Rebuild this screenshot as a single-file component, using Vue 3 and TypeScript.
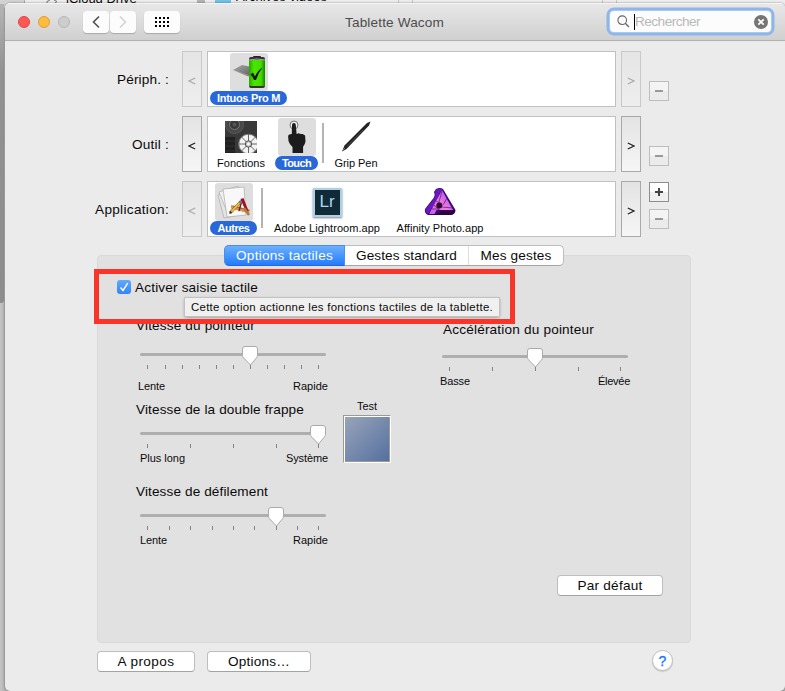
<script setup lang="ts">
import { ref } from 'vue'
import type { Directive } from 'vue'

interface Item {
  label: string
  icon: string
  width: number
  textWidth: number
  selected?: boolean
  separator?: boolean
}

interface Row {
  label: string
  labelWidth: number
  prev: boolean
  next: boolean
  add: boolean
  items: Item[]
}

interface Slider {
  id: string
  title: string
  titleWidth: number
  ticks: number
  value: number
  low: string
  lowWidth: number
  high: string
  highWidth: number
}

// Adjusts the tracking so that a label takes exactly the given width
const vFit: Directive<HTMLElement, number> = {
  mounted(el, binding) {
    const count = (el.textContent ?? '').length
    const natural = el.getBoundingClientRect().width
    el.style.letterSpacing = `${(binding.value - natural) / count}px`
  },
}

const search = ref('')
const touchEnabled = ref(true)
const activeTab = ref(0)

const tabs = [
  { label: 'Options tactiles', width: 97 },
  { label: 'Gestes standard', width: 101 },
  { label: 'Mes gestes', width: 71 },
]

const rows: Row[] = [
  {
    label: 'Périph. :', labelWidth: 52, prev: false, next: false, add: false,
    items: [{ label: 'Intuos Pro M', icon: 'tablet', width: 77, textWidth: 63, selected: true }],
  },
  {
    label: 'Outil :', labelWidth: 37, prev: true, next: true, add: false,
    items: [
      { label: 'Fonctions', icon: 'functions', width: 62, textWidth: 48 },
      { label: 'Touch', icon: 'touch', width: 43, textWidth: 29, selected: true, separator: true },
      { label: 'Grip Pen', icon: 'pen', width: 56, textWidth: 43 },
    ],
  },
  {
    label: 'Application:', labelWidth: 74, prev: false, next: true, add: true,
    items: [
      { label: 'Autres', icon: 'apps', width: 47, textWidth: 32, selected: true, separator: true },
      { label: 'Adobe Lightroom.app', icon: 'lightroom', width: 120, textWidth: 106 },
      { label: 'Affinity Photo.app', icon: 'affinity', width: 100, textWidth: 87 },
    ],
  },
]

const leftSliders: Slider[] = [
  { id: 'pointer', title: 'Vitesse du pointeur', titleWidth: 119, ticks: 11, value: 6, low: 'Lente', lowWidth: 27, high: 'Rapide', highWidth: 35 },
  { id: 'double', title: 'Vitesse de la double frappe', titleWidth: 168, ticks: 5, value: 4, low: 'Plus long', lowWidth: 45, high: 'Système', highWidth: 42 },
  { id: 'scroll', title: 'Vitesse de défilement', titleWidth: 132, ticks: 9, value: 6, low: 'Lente', lowWidth: 27, high: 'Rapide', highWidth: 35 },
]

const rightSliders: Slider[] = [
  { id: 'accel', title: 'Accélération du pointeur', titleWidth: 151, ticks: 5, value: 2, low: 'Basse', lowWidth: 30, high: 'Élevée', highWidth: 32 },
]

const columns = [leftSliders, rightSliders]

const tickX = (s: Slider, i: number) => 11.5 + Math.ceil((171 / (s.ticks - 1)) * i)
</script>

<template>
  <div class="desktop">
    <div class="behind">
      <span class="behind-toolbar"></span>
      <svg class="behind-cloud" width="18" height="4" viewBox="0 0 18 4">
        <path d="M3 3.5V1.5L6 0M10 0l3 1.5L11 3" fill="none" stroke="#777" />
      </svg>
      <span class="behind-drive">iCloud Drive</span>
      <span class="behind-scroll"></span>
      <span class="behind-folder"></span>
      <span class="behind-videos">Archives vidéos</span>
      <span class="behind-line first"></span>
      <span class="behind-line second"></span>
    </div>
    <div class="behind-thumb"></div>

    <div class="window">
      <header class="titlebar">
        <div class="controls">
          <span class="light red"></span>
          <span class="light yellow"></span>
          <span class="light off"></span>
          <button class="tool back">
            <svg width="10" height="14" viewBox="0 0 10 14"><path d="M8 1.5 2.5 7 8 12.5" fill="none" stroke="#505050" stroke-width="1.6" /></svg>
          </button>
          <button class="tool forward" disabled>
            <svg width="10" height="14" viewBox="0 0 10 14"><path d="M2 1.5 7.5 7 2 12.5" fill="none" stroke="#cfcfcf" stroke-width="1.4" /></svg>
          </button>
          <button class="tool grid">
            <svg width="15" height="11" viewBox="0 0 15 11">
              <template v-for="y in 3" :key="y">
                <rect v-for="x in 4" :key="x" :x="(x - 1) * 4" :y="(y - 1) * 4" width="2" height="2" />
              </template>
            </svg>
          </button>
        </div>
        <h1 class="title"><span v-fit="99">Tablette Wacom</span></h1>
        <div class="search">
          <svg class="lens" width="13" height="13" viewBox="0 0 13 13">
            <circle cx="5.2" cy="5.2" r="4.3" fill="none" stroke="#666" stroke-width="1.1" />
            <path d="m8.3 8.3 3.6 3.7" stroke="#666" stroke-width="1.3" />
          </svg>
          <span class="caret"></span>
          <span class="placeholder" v-fit="65">{{ search || 'Rechercher' }}</span>
          <svg class="clear" width="14" height="14" viewBox="0 0 14 14">
            <circle cx="7" cy="7" r="7" fill="#757575" />
            <path d="m4.3 4.3 5.4 5.4m0-5.4L4.3 9.7" stroke="#fff" stroke-width="1.8" />
          </svg>
        </div>
      </header>

      <main class="content">
        <section v-for="row in rows" :key="row.label" class="row">
          <div class="row-label"><span v-fit="row.labelWidth">{{ row.label }}</span></div>
          <button class="arrow" :disabled="!row.prev">
            <svg width="8" height="8" viewBox="0 0 8 8"><path d="M7.2 1 1 4l6.2 3" /></svg>
          </button>
          <div class="list">
            <template v-for="item in row.items" :key="item.label">
              <div class="item" :class="{ selected: item.selected }" :style="{ width: item.width + 'px' }">
                <div class="icon">
                  <svg v-if="item.icon === 'tablet'" width="38" height="38" viewBox="0 0 38 38">
                    <defs>
                      <linearGradient id="battery">
                        <stop offset="0" stop-color="#22a800" />
                        <stop offset=".3" stop-color="#4be600" />
                        <stop offset=".75" stop-color="#43dc00" />
                        <stop offset="1" stop-color="#168000" />
                      </linearGradient>
                      <linearGradient id="slab" x2="1" y2="1">
                        <stop offset="0" stop-color="#aaa" />
                        <stop offset="1" stop-color="#5e5e5e" />
                      </linearGradient>
                    </defs>
                    <path d="M3 17 12 12l10 2v9l-4-1z" fill="url(#slab)" />
                    <path d="M3 17l15 5 3 1v1l-4-1z" fill="#888" />
                    <rect x="23" y="3" width="8" height="3" rx="1" fill="#222" />
                    <rect x="19" y="4" width="16" height="31" rx="2" fill="#333" />
                    <rect x="19" y="7" width="16" height="26" fill="url(#battery)" />
                    <path d="M19 7q8-2 16 0" stroke="#aaa" fill="none" />
                    <path d="M20.5 21.5 23 19.5l2 4Q28 17 32.5 14.5 28 20 26 27h-2q-1-3-3.5-5.5z" fill="#171717" />
                  </svg>
                  <svg v-else-if="item.icon === 'functions'" width="32" height="32" viewBox="0 0 32 32">
                    <rect width="32" height="32" fill="#393939" />
                    <circle cx="9.5" cy="3.5" r="9" fill="#484848" stroke="#5b5b5b" />
                    <circle cx="9.5" cy="3.5" r="5" fill="#383838" stroke="#777" />
                    <circle cx="9.5" cy="3.5" r="2" fill="#555" />
                    <path d="M0 16h10v16H0z" fill="#202020" />
                    <path d="M0 20h10M0 25h10M0 30h10" stroke="#333" />
                    <circle cx="23.5" cy="23" r="9.8" fill="#f2f2f2" stroke="#777" />
                    <path d="M23.5 13v20M13.5 23h20M16.5 16l14 14M30.5 16l-14 14" stroke="#666" />
                    <circle cx="23.5" cy="23" r="3.2" fill="#bbb" stroke="#555" />
                    <circle cx="23.5" cy="23" r="1.5" fill="#fff" />
                  </svg>
                  <svg v-else-if="item.icon === 'touch'" width="38" height="38" viewBox="0 0 38 38">
                    <circle cx="16" cy="7" r="4" fill="#eee" stroke="#777" />
                    <path d="M14 7q0-2 1.9-2t1.9 2l.8 9 2-.7 2 .8 2-.2 2.500 1.600.4 6q-.5 3-2.400 5.300V35H14.500v-6q-3.500-3.500-4-6l-.4-5q.4-2 3.700-2z" fill="#1c1c1c" />
                  </svg>
                  <svg v-else-if="item.icon === 'pen'" width="32" height="32" viewBox="0 0 32 32">
                    <path d="M2 30.500 4.500 24.500 27 2l3.500-1.500L29 4.500 6.500 28z" fill="#232323" />
                    <path d="m7 25.500 16-16.500" stroke="#4b4b4b" />
                    <path d="m3 29 2-2" stroke="#777" />
                  </svg>
                  <svg v-else-if="item.icon === 'apps'" width="38" height="38" viewBox="0 0 38 38">
                    <g stroke="#aaa" stroke-width=".7">
                      <path d="m3 12 7-5 14 25-15 3z" fill="#e5e5e5" />
                      <path d="m4 9 19-6 8 26-17 5z" fill="#f1f1f1" />
                      <path d="m8 6 21-2 2 28-19 2z" fill="#f8f8f8" />
                    </g>
                    <path d="m16 22 19 4.500-1 4-18-5z" fill="#d59461" />
                    <path d="m18 23 16 4.500" stroke="#8e4f27" stroke-width=".7" />
                    <path d="m25.500 16 3-1 5 13-2.500 1z" fill="#a50f19" />
                    <path d="m27 17-3 11" stroke="#742020" stroke-width="1.500" />
                    <path d="m29 25 5 7" stroke="#b17b46" stroke-width="2.500" />
                    <path d="M15 30 26 18.500" stroke="#6b4a16" stroke-width="2.800" />
                    <path d="M16 29 25 19.500" stroke="#f2bd2f" stroke-width="2" />
                    <path d="m24.500 20 2-2" stroke="#7770a9" stroke-width="2.500" />
                    <path d="m14 31 1.500-3 1.500 1.500z" fill="#222" />
                  </svg>
                  <div v-else-if="item.icon === 'lightroom'" class="lightroom">Lr</div>
                  <svg v-else width="32" height="32" viewBox="0 0 32 32">
                    <defs>
                      <linearGradient id="prism" x1="0" y1="1" x2="1" y2="0">
                        <stop offset="0" stop-color="#b65af2" />
                        <stop offset=".45" stop-color="#ef7fdc" />
                        <stop offset="1" stop-color="#9a3dff" />
                      </linearGradient>
                    </defs>
                    <path d="M12 3q4-2 7 0l12.500 21q0 4-4 5H4q-4-2-3-6l7-9q4-4 2-8z" fill="#3c0870" />
                    <path d="M11 5.500 13 3h5l-7.500 15L4 28q-3-2-2.300-5L9 14q3-3 2-8.500z" fill="#6818bd" />
                    <path d="m18 4 11 20H12.500l-2 4H5z" fill="url(#prism)" />
                    <path d="M15 27v-2l16-1q0 4-4 5H6z" fill="#2c0345" />
                    <path d="m12 15 6 3M10 19l5 5M19 19l4-7M16 23H8M18 21l11 1M15 16l3-11" stroke="#6a1a80" stroke-width=".8" />
                    <circle cx="15.300" cy="19.500" r="3" fill="#330832" />
                  </svg>
                </div>
                <div class="item-label"><span v-fit="item.textWidth">{{ item.label }}</span></div>
              </div>
              <div v-if="item.separator" class="separator"></div>
            </template>
          </div>
          <button class="arrow" :disabled="!row.next">
            <svg width="8" height="8" viewBox="0 0 8 8"><path d="M.8 1 7 4 .8 7" /></svg>
          </button>
          <div class="edit">
            <button v-if="row.add" class="square add">
              <svg width="10" height="10" viewBox="0 0 10 10"><path d="M1 5h8M5 1v8" stroke="#444" stroke-width="2" /></svg>
            </button>
            <button class="square" disabled>
              <svg width="10" height="10" viewBox="0 0 10 10"><path d="M1 5h8" stroke="#999" stroke-width="2" /></svg>
            </button>
          </div>
        </section>

        <section class="panel">
          <nav class="tabs">
            <button
              v-for="(tab, i) in tabs"
              :key="tab.label"
              class="tab"
              :class="{ active: activeTab === i }"
              @click="activeTab = i"
            >
              <span v-fit="tab.width">{{ tab.label }}</span>
            </button>
          </nav>

          <div class="enable" @click="touchEnabled = !touchEnabled">
            <span class="checkbox">
              <svg v-if="touchEnabled" width="14" height="14" viewBox="0 0 14 14"><path d="m3.500 7.500 2.500 3 4.700-7.300" fill="none" stroke="#fff" stroke-width="1.400" /></svg>
            </span>
            <span class="enable-label" v-fit="123">Activer saisie tactile</span>
          </div>

          <div class="columns">
            <template v-for="(column, c) in columns" :key="c">
              <div class="column">
                <div v-for="s in column" :key="s.id" class="slider" :class="s.id">
                  <div class="slider-title"><span v-fit="s.titleWidth">{{ s.title }}</span></div>
                  <svg width="196" height="24" viewBox="0 0 196 24">
                    <rect x="4" y="8" width="186" height="3" rx="1.500" fill="#aeaeae" />
                    <path v-for="n in s.ticks" :key="n" :d="`M${tickX(s, n - 1)} 20v4`" stroke="#848484" />
                    <g :transform="`translate(${tickX(s, s.value) - 8.5} 0)`">
                      <path d="M3 1.500h10q2.500 0 2.500 2.500v6.500q0 1.200-1 2.300L8.500 20 1.500 12.800q-1-1.100-1-2.300V4Q.500 1.500 3 1.500z" fill="#fff" stroke="#aaa" />
                    </g>
                  </svg>
                  <div class="bounds">
                    <span v-fit="s.lowWidth">{{ s.low }}</span>
                    <span v-fit="s.highWidth">{{ s.high }}</span>
                  </div>
                </div>
              </div>
              <div v-if="c === 0" class="test">
                <span v-fit="20">Test</span>
                <div class="test-area"></div>
              </div>
            </template>
          </div>

          <button class="push default"><span v-fit="65">Par défaut</span></button>
        </section>

        <footer class="footer">
          <button class="push about"><span v-fit="57">A propos</span></button>
          <button class="push options"><span v-fit="62">Options…</span></button>
          <button class="help">?</button>
        </footer>
      </main>
    </div>

    <div class="tooltip"><span v-fit="302">Cette option actionne les fonctions tactiles de la tablette.</span></div>
    <div class="highlight"></div>
  </div>
</template>

<style>
body {
  margin: 0;
  overflow: hidden;
}
</style>

<style scoped>
* {
  box-sizing: border-box;
}

.desktop {
  position: relative;
  width: 785px;
  height: 691px;
  padding: 3px 0 0 5px;
  overflow: hidden;
  background: linear-gradient(to right, #c5c5c5, #b0b0b0 5px);
  font-family: 'Liberation Sans', Arial, sans-serif;
  font-size: 13.6px;
  line-height: 16px;
  color: #0a0a0a;
}

button {
  display: flex;
  align-items: center;
  justify-content: center;
  padding: 0;
  margin: 0;
  border: none;
  font: inherit;
  color: inherit;
}

span {
  white-space: nowrap;
}

svg {
  display: block;
  flex: none;
}

/* Finder window showing behind the preferences */
.behind {
  position: absolute;
  inset: 0 0 auto 0;
  height: 8px;
  background: #ededed;
}

.behind span,
.behind svg {
  position: absolute;
}

.behind-toolbar {
  left: 0;
  width: 25px;
  height: 8px;
  background: #d2d2d2;
  border-right: 1px solid #aaa;
}

.behind-cloud {
  left: 44px;
  top: 0;
}

.behind-drive {
  left: 66px;
  top: -9px;
  font-size: 13px;
}

.behind-scroll {
  left: 197px;
  width: 8px;
  height: 8px;
  background: #b2b2b2;
}

.behind-folder {
  left: 215px;
  width: 16px;
  height: 3px;
  background: #76c0e8;
}

.behind-videos {
  left: 236px;
  top: -11px;
  font-size: 13px;
}

.behind-line {
  width: 15px;
  height: 8px;
  border: 1px solid #c8c8c8;
  border-width: 0 1px;
}

.behind-line.first {
  left: 398px;
}

.behind-line.second {
  left: 602px;
}

.behind-thumb {
  position: absolute;
  left: 0;
  top: 4px;
  width: 4px;
  height: 299px;
  border-radius: 0 0 3px 0;
  background: linear-gradient(#b5b5b5, #929292 70px, #8d8d8d);
}

.window {
  position: relative;
  height: 688px;
  border-radius: 5px;
  overflow: hidden;
  background: #ebebeb;
  box-shadow: 0 0 2px rgba(0, 0, 0, 0.5);
}

.titlebar {
  display: grid;
  grid-template-columns: 1fr auto 1fr;
  align-items: center;
  height: 38px;
  padding: 0 14px 0 13px;
  border-bottom: 1px solid #b1b1b1;
  background: linear-gradient(#e8e8e8, #d0d0d0);
  box-shadow: inset 0 1px #f5f5f5;
}

.controls {
  display: flex;
  align-items: center;
}

.light {
  width: 12px;
  height: 12px;
  margin-right: 8px;
  border-radius: 50%;
}

.light.red {
  background: #fc5753;
  border: 1px solid #df4744;
}

.light.yellow {
  background: #fdbc40;
  border: 1px solid #de9f34;
}

.light.off {
  background: #cdcdcd;
  border: 1px solid #b6b6b6;
}

.tool {
  height: 22px;
  border-radius: 4px;
  background: #fcfcfc;
  box-shadow: 0 1px 1px rgba(0, 0, 0, 0.2);
}

.tool.back {
  width: 26px;
  margin-left: 5px;
}

.tool.forward {
  width: 26px;
  margin-left: 1px;
}

.tool.grid {
  width: 36px;
  margin-left: 8px;
}

.tool.grid svg {
  margin-top: 1px;
}

.title {
  margin: 2px 0 0;
  font-size: 13.6px;
  font-weight: normal;
  color: #4d4d4d;
}

.search {
  display: flex;
  align-items: center;
  justify-self: end;
  width: 161px;
  height: 21px;
  padding: 0 3px 0 7px;
  border-radius: 4px;
  background: #fcfcfc;
  box-shadow: 0 0 0 1px #a5caf8, 0 0 0 3.5px #8fb6e9;
}

.lens {
  margin-right: 4px;
}

.caret {
  width: 1px;
  height: 16px;
  background: #000;
}

.placeholder {
  padding-top: 1px;
  color: #b9b9b9;
}

.clear {
  margin-left: auto;
}

.content {
  padding-top: 10px;
}

.row {
  display: flex;
  height: 56px;
  margin-bottom: 9px;
}

.row-label {
  width: 164px;
  margin-right: 13px;
  padding-top: 21px;
  text-align: right;
}

.arrow {
  width: 20px;
  border: 1px solid #a9a9a9;
  background: linear-gradient(#e3e3e3, #f6f6f6);
}

.arrow path {
  fill: none;
  stroke: #222;
  stroke-width: 1.2;
}

.arrow svg {
  margin-top: 3px;
}

.arrow:disabled {
  border-color: #c9c9c9;
  background: linear-gradient(#e5e5e5, #eee);
}

.arrow:disabled path {
  stroke: #aaa;
}

.list {
  display: flex;
  width: 409px;
  margin: 0 5px;
  padding: 1px 2px;
  border: 1px solid #c0c0c0;
  background: #fff;
}

.item {
  flex: none;
  margin-right: 3px;
}

.icon {
  display: flex;
  align-items: center;
  justify-content: center;
  width: 38px;
  height: 38px;
  margin: 0 auto;
  border-radius: 3px;
}

.selected .icon {
  background: #dedede;
}

.item-label {
  height: 14px;
  border-radius: 7px;
  font-size: 11px;
  line-height: 14px;
  text-align: center;
}

.selected .item-label {
  background: #2868d8;
  color: #fff;
  font-weight: bold;
}

.separator {
  width: 2px;
  height: 40px;
  margin: 5px 4px 0 1px;
  background: #b3b3b3;
}

.lightroom {
  width: 29px;
  height: 29px;
  border: 2px solid #acd0e8;
  background: #102a37;
  box-shadow: 0 1px 2px rgba(0, 0, 0, 0.5);
  font-size: 17px;
  line-height: 23px;
  text-align: center;
  color: #b1d7ef;
}

.edit {
  display: flex;
  flex-direction: column;
  justify-content: flex-end;
  gap: 7px;
  margin-left: 8px;
  padding-bottom: 6px;
}

/* the add/remove pair sits two pixels higher than a lone remove button */
.edit:has(.add) {
  padding-bottom: 8px;
}

.square {
  width: 20px;
  height: 20px;
  border: 1px solid #bdbdbd;
  background: linear-gradient(#f4f4f4 50%, #ebebeb 50%);
}

.square.add {
  border-color: #8d8d8d;
  background: linear-gradient(#fff 50%, #f0f0f0 50%);
}

.panel {
  width: 594px;
  height: 388px;
  margin: 18px 0 0 92px;
  padding-left: 38px;
  border: 1px solid #d9d9d9;
  border-radius: 4px;
  background: #e1e1e1;
}

.tabs {
  display: flex;
  width: 340px;
  height: 21px;
  margin: -11px 0 0 88px;
  border: 1px solid #bdbdbd;
  border-bottom-color: #a5a5a5;
  border-radius: 5px;
  background: #fff;
}

.tab {
  width: 124px;
  background: none;
  border-right: 1px solid #ddd;
}

.tab:last-child {
  width: 94px;
  border-right: none;
}

.tab.active {
  width: 121px;
  margin: -1px 0 -1px -1px;
  border: 1px solid #4a8dec;
  border-bottom-color: #2567d8;
  border-radius: 5px 0 0 5px;
  background: linear-gradient(#6cb1fb, #237bfe);
  color: #fff;
}

.enable {
  display: flex;
  align-items: center;
  gap: 4px;
  height: 16px;
  margin: 13px 0 22px -19px;
}

.enable-label {
  padding-top: 2px;
}

.checkbox {
  width: 14px;
  height: 14px;
  border-radius: 3px;
  background: linear-gradient(#62aafa, #3283f8);
}

.columns {
  display: flex;
  height: 230px;
}

.column {
  width: 207px;
}

.slider-title {
  height: 16px;
  line-height: 18px;
}

.slider svg {
  margin: 7px 0 3px;
}

.slider.pointer {
  margin-bottom: 8px;
}

.slider.pointer svg {
  margin: 12px 0 10px;
}

.slider.double {
  margin-bottom: 18px;
}

.slider.accel {
  margin-top: 4px;
}

.slider.accel svg {
  margin-top: 10px;
}

.slider.accel .slider-title {
  padding-left: 5px;
}

.bounds {
  display: flex;
  justify-content: space-between;
  width: 192px;
  padding-left: 4px;
  font-size: 11px;
  line-height: 14px;
}

.pointer .bounds,
.accel .bounds {
  padding-left: 2px;
}

.test {
  width: 48px;
  margin: 82px 47px 0 0;
  font-size: 11px;
  line-height: 14px;
  text-align: center;
}

.test-area {
  height: 48px;
  margin-top: 2px;
  border: 1px solid #fff;
  border-top-color: #999;
  border-left-color: #999;
  background: linear-gradient(135deg, #9aa5ba, #536f9f);
  box-shadow: inset 1px 1px #fff, inset -1px -1px #999;
}

.push {
  height: 21px;
  border: 1px solid #bebebe;
  border-bottom-color: #a3a3a3;
  border-radius: 4px;
  background: #fff;
}

.push.default {
  width: 106px;
  margin: 28px 27px 0 auto;
}

.footer {
  display: flex;
  width: 576px;
  margin: 8px 0 0 92px;
}

.push.about {
  width: 98px;
  margin-right: 12px;
}

.push.options {
  width: 104px;
}

.help {
  width: 21px;
  height: 21px;
  margin: -1px 0 0 auto;
  border: 1px solid #bfbfbf;
  border-radius: 50%;
  background: #fff;
  box-shadow: 0 1px 1px rgba(0, 0, 0, 0.15);
  font-size: 14px;
  color: #1877fb;
  -webkit-text-stroke: 0.3px #1877fb;
}

.tooltip {
  position: absolute;
  left: 185px;
  top: 298px;
  width: 314px;
  height: 18px;
  padding-left: 6px;
  background: #f0f0f0;
  box-shadow: 0 0 0 1px #c2c2c2, 0 1px 3px rgba(0, 0, 0, 0.5);
  font-size: 11.4px;
  line-height: 18px;
}

.highlight {
  position: absolute;
  left: 94px;
  top: 269px;
  width: 421px;
  height: 55px;
  border: 5px solid #f93529;
}
</style>
